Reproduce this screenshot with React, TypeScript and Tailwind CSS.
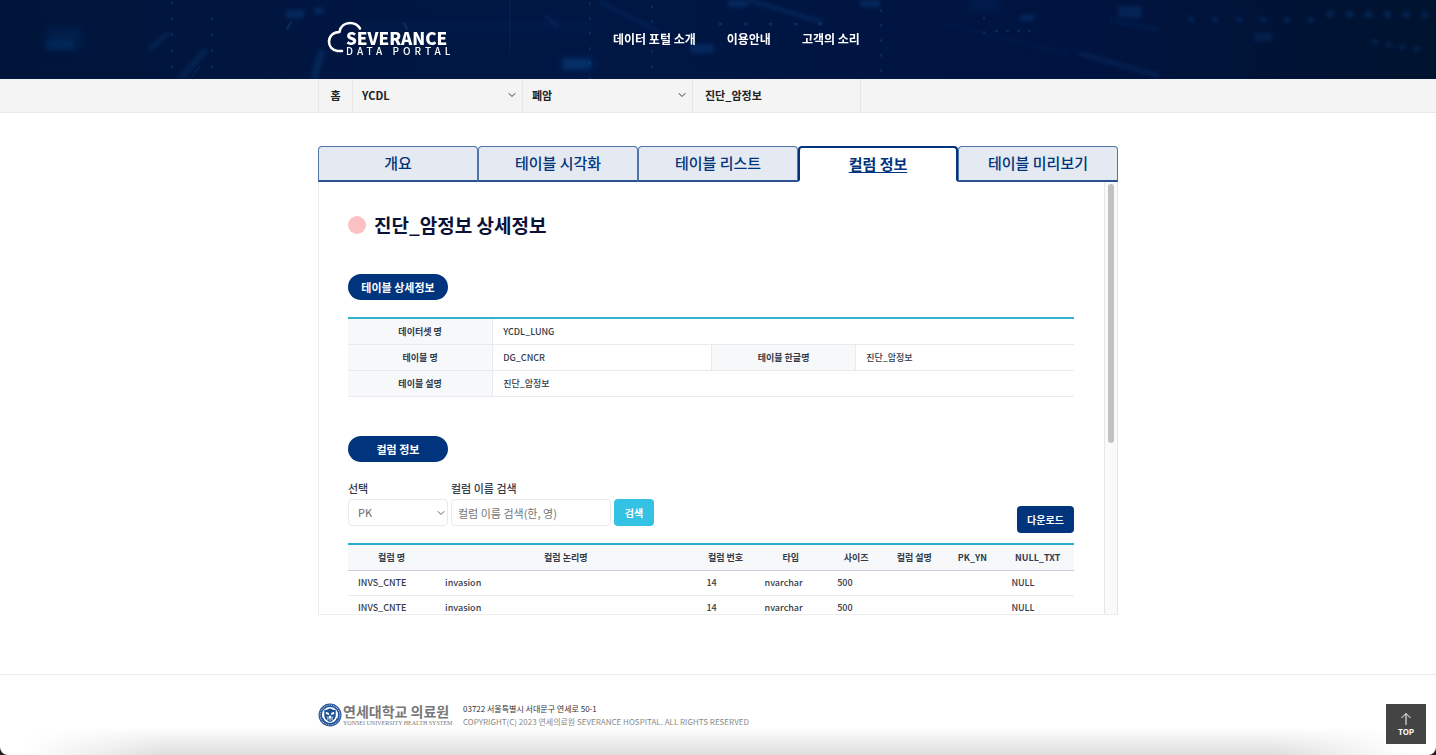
import { useState } from "react";
import { ChevronDown } from "lucide-react";

const NAV = ["데이터 포털 소개", "이용안내", "고객의 소리"];

const TABS = ["개요", "테이블 시각화", "테이블 리스트", "컬럼 정보", "테이블 미리보기"];

const COLUMNS = [
  { label: "컬럼 명", width: "w-[12%]" },
  { label: "컬럼 논리명", width: "w-[36%]" },
  { label: "컬럼 번호", width: "w-[8%]" },
  { label: "타입", width: "w-[10%]" },
  { label: "사이즈", width: "w-[8%]" },
  { label: "컬럼 설명", width: "w-[8%]" },
  { label: "PK_YN", width: "w-[8%]" },
  { label: "NULL_TXT", width: "w-[10%]" },
];

const ROWS = [
  ["INVS_CNTE", "invasion", "14", "nvarchar", "500", "", "", "NULL"],
  ["INVS_CNTE", "invasion", "14", "nvarchar", "500", "", "", "NULL"],
];

function HeaderBackdrop() {
  return (
    <svg
      aria-hidden="true"
      className="absolute inset-0 size-full"
      viewBox="0 0 1436 79"
      preserveAspectRatio="xMidYMid slice"
    >
      <defs>
        <linearGradient id="navy" x1="0" x2="1" y1="0" y2="0">
          <stop offset="0" stopColor="#00153a" />
          <stop offset="0.35" stopColor="#001744" />
          <stop offset="0.75" stopColor="#001440" />
          <stop offset="1" stopColor="#00132f" />
        </linearGradient>
        <filter id="soft" x="-50%" y="-50%" width="200%" height="200%">
          <feGaussianBlur stdDeviation="2" />
        </filter>
        <filter id="haze" x="-50%" y="-50%" width="200%" height="200%">
          <feGaussianBlur stdDeviation="5" />
        </filter>
      </defs>
      <rect width="1436" height="79" fill="url(#navy)" />
      <g filter="url(#haze)" fill="#00468c" opacity="0.2">
        <rect x="46" y="28" width="36" height="22" />
        <rect x="360" y="24" width="240" height="4" />
        <rect x="560" y="56" width="34" height="16" />
        <rect x="970" y="0" width="30" height="10" />
      </g>
      <g filter="url(#soft)" fill="#0a4f96" opacity="0.35">
        <rect x="46" y="40" width="28" height="10" opacity="0.6" />
        <rect x="286" y="10" width="18" height="8" />
        <rect x="314" y="8" width="10" height="6" />
        <rect x="563" y="59" width="28" height="10" />
        <rect x="690" y="44" width="24" height="9" />
        <rect x="728" y="0" width="20" height="7" />
        <rect x="860" y="0" width="20" height="7" />
        <rect x="1020" y="15" width="14" height="6" />
        <rect x="1118" y="6" width="24" height="12" opacity="0.8" />
        <rect x="1254" y="33" width="18" height="8" opacity="0.7" />
      </g>
      <g filter="url(#soft)" stroke="#0a4a8c" fill="none" opacity="0.35">
        <path d="M148 50L170 32" strokeWidth="4" />
        <path d="M180 79L206 50" strokeWidth="7" opacity="0.7" />
        <path d="M314 79L322 50" strokeWidth="7" />
        <path d="M545 15L558 27" strokeWidth="3" />
        <path d="M600 2L660 32" strokeWidth="3" />
        <path d="M748 0L822 22" strokeWidth="4" />
        <path d="M1078 53L1160 76" strokeWidth="5" opacity="0.7" />
        <path d="M942 23L1070 54" strokeWidth="2" opacity="0.6" />
        <path d="M1110 20L1160 30" strokeWidth="3" opacity="0.7" />
      </g>
      <g stroke="#1763a8" strokeLinecap="round" fill="none" opacity="0.3">
        <path d="M172 2V79M212 18V79" strokeWidth="2" strokeDasharray="1 15" />
        <path d="M590 3V79M652 6V79M881 10V79" strokeWidth="2" strokeDasharray="1 14" />
        <path d="M984 18V35" strokeWidth="2" strokeDasharray="1 13" />
        <path d="M996 31H1032" strokeWidth="2" strokeDasharray="1 10" />
        <path d="M720 24H840" strokeWidth="3" strokeDasharray="1 24" />
        <path d="M192 77L200 66" />
        <path d="M510 0V54" opacity="0.6" />
        <path d="M287 29L291 22M404 23L407 29" strokeWidth="2" />
      </g>
      <g filter="url(#soft)" stroke="#0b4c94" strokeLinecap="round" fill="none" opacity="0.35">
        <path d="M1190 19L1315 20" strokeWidth="5" strokeDasharray="2 22" />
        <path d="M1330 14L1425 15" strokeWidth="7" strokeDasharray="1 18" />
        <path d="M1374 42L1428 51" strokeWidth="5" strokeDasharray="2 12" />
      </g>
    </svg>
  );
}

function Logo() {
  return (
    <div className="relative h-9 w-[124px] text-white">
      <svg viewBox="0 0 36 36" className="absolute top-0 left-0 size-9" fill="none" aria-hidden="true">
        <path
          d="M15 30H10.500C5 29 2 25 2 20.500C2 15.500 6 11 12.500 11C13.500 5 18 2 23 2C28 2 31 4 33 7.500"
          stroke="currentColor"
          strokeWidth="2.600"
          strokeLinecap="round"
          strokeLinejoin="round"
        />
      </svg>
      <div className="relative pt-[10px] pl-[19px] whitespace-nowrap">
        <span className="block text-[17px] leading-[14px] font-black">SEVERANCE</span>
        <span className="block text-[10px] leading-[11px] font-medium tracking-[4px]">DATA PORTAL</span>
      </div>
    </div>
  );
}

function Seal() {
  return (
    <svg viewBox="0 0 46 46" className="size-6 shrink-0" aria-hidden="true">
      <circle cx="23" cy="23" r="22" fill="#1d4f96" />
      <circle cx="23" cy="23" r="19" fill="none" stroke="#b9cbe4" strokeWidth="2" strokeDasharray="2 1.500" />
      <circle cx="23" cy="23" r="15.500" fill="#fff" />
      <path d="M12 13C16 14 19 12 23 10C27 12 30 14 34 13V23C34 30 29 34 23 37C17 34 12 30 12 23Z" fill="#1d4f96" />
      <path d="M15 17L21 19V23L15 21ZM31 17L25 19V23L31 21Z" fill="#fff" />
      <circle cx="23" cy="27" r="3" fill="#fff" />
      <path d="M17 26L20 31L17 33M29 26L26 31L29 33M23 30V35" stroke="#fff" strokeWidth="1.500" fill="none" />
      <path d="M9 29C11 35 16 39 23 40C30 39 35 35 37 29" stroke="#1d4f96" strokeWidth="2" fill="none" />
    </svg>
  );
}

function SectionPill({ children }: { children: string }) {
  return (
    <h3 className="flex h-[26px] w-[100px] items-center justify-center rounded-full bg-[#00347d] text-[11px] font-bold text-white">
      {children}
    </h3>
  );
}

function CrumbSelect({ label, value }: { label: string; value: string }) {
  return (
    <div className="relative w-[170px] border-r border-[#e6e6e6]">
      <select
        aria-label={label}
        className="h-full w-full appearance-none bg-transparent px-[9px] text-[11px] font-bold text-[#222] outline-none"
      >
        <option>{value}</option>
      </select>
      <ChevronDown
        strokeWidth={2}
        className="pointer-events-none absolute top-2 right-1 h-4 w-3 text-[#333]"
      />
    </div>
  );
}

export default function App() {
  const [tab, setTab] = useState(3);
  const [keyword, setKeyword] = useState("");

  const th = "border-r border-b border-[#e8eaed] bg-[#f6f8fa] text-center font-bold";
  const td = "border-b border-[#e8eaed] px-[10px] font-medium";

  return (
    <div className="bg-[#222]">
      <div className="relative flex min-h-screen flex-col overflow-hidden rounded-b-lg bg-white font-['Noto_Sans_CJK_KR',sans-serif] text-[#333b4a]">
        <header className="relative h-[79px] bg-[#001541]">
          <HeaderBackdrop />
          <div className="relative mx-auto flex h-[78px] max-w-[800px] items-center">
            <a href="#home" className="ml-[9px]">
              <Logo />
            </a>
            <nav className="ml-[162px] flex gap-[31px] text-[12px] font-bold text-white">
              {NAV.map((item) => (
                <a key={item} href="#nav">
                  {item}
                </a>
              ))}
            </nav>
          </div>
        </header>

        <div className="h-[34px] border-b border-[#e9e9e9] bg-[#f4f4f4]">
          <div className="mx-auto flex h-full max-w-[800px] text-[11px] font-bold text-[#222]">
            <a href="#home" className="flex w-[35px] items-center justify-center border-x border-[#e6e6e6]">
              홈
            </a>
            <CrumbSelect label="데이터셋" value="YCDL" />
            <CrumbSelect label="암종" value="폐암" />
            <span className="flex w-[168px] items-center border-r border-[#e6e6e6] px-3">진단_암정보</span>
          </div>
        </div>

        <main className="mx-auto mt-[33px] w-full max-w-[800px]">
          <div role="tablist" className="grid grid-cols-5">
            {TABS.map((label, i) => (
              <button
                key={label}
                type="button"
                role="tab"
                aria-selected={tab === i}
                onClick={() => setTab(i)}
                className={
                  tab === i
                    ? "h-9 rounded-t border-2 border-[#00347d] border-b-white bg-white text-[15px] font-bold text-[#00347d] underline underline-offset-2"
                    : "h-9 rounded-t border border-b-2 border-[#5274a8] border-b-[#2a5293] bg-[#e5eaf2] text-[15px] font-medium text-[#00347d]"
                }
              >
                {label}
              </button>
            ))}
          </div>

          <div className="flex h-[433px] overflow-hidden border-b border-l border-[#ececec]">
            <div className="min-w-0 flex-1 pt-[29px] pr-[30px] pl-[29px]">
              <h2 className="flex h-7 items-center gap-2 text-[19px] font-bold text-[#0b1237]">
                <span className="size-[18px] rounded-full bg-[#fcc2c3]" />
                진단_암정보 상세정보
              </h2>

              <div className="mt-[35px]">
                <SectionPill>테이블 상세정보</SectionPill>
              </div>
              <table className="mt-[17px] w-full table-fixed border-separate border-spacing-0 border-t-2 border-[#35b1cb] text-[9px]">
                <colgroup>
                  <col className="w-[20%]" />
                  <col className="w-[30%]" />
                  <col className="w-[20%]" />
                  <col className="w-[30%]" />
                </colgroup>
                <tbody>
                  <tr className="h-[26px]">
                    <th className={th}>데이터셋 명</th>
                    <td className={td} colSpan={3}>
                      YCDL_LUNG
                    </td>
                  </tr>
                  <tr className="h-[26px]">
                    <th className={th}>테이블 명</th>
                    <td className={td}>DG_CNCR</td>
                    <th className={`border-l ${th}`}>테이블 한글명</th>
                    <td className={td}>진단_암정보</td>
                  </tr>
                  <tr className="h-[26px]">
                    <th className={th}>테이블 설명</th>
                    <td className={td} colSpan={3}>
                      진단_암정보
                    </td>
                  </tr>
                </tbody>
              </table>

              <div className="mt-[39px]">
                <SectionPill>컬럼 정보</SectionPill>
              </div>
              <div className="mt-[18px] flex items-start justify-between">
                <form className="flex items-end gap-[3px] text-[11px]" onSubmit={(e) => e.preventDefault()}>
                  <div className="w-[100px]">
                    <label htmlFor="kind" className="block h-[19px] leading-4 font-medium">
                      선택
                    </label>
                    <div className="relative">
                      <select
                        id="kind"
                        className="block h-[27px] w-full appearance-none rounded border border-[#e8eaed] bg-white px-[9px] text-[#666] outline-none"
                      >
                        <option>PK</option>
                      </select>
                      <ChevronDown
                        strokeWidth={2}
                        className="pointer-events-none absolute top-[6px] right-px h-4 w-3 text-[#666]"
                      />
                    </div>
                  </div>
                  <div className="w-[160px]">
                    <label htmlFor="keyword" className="block h-[19px] leading-4 font-medium">
                      컬럼 이름 검색
                    </label>
                    <input
                      id="keyword"
                      type="text"
                      value={keyword}
                      onChange={(e) => setKeyword(e.target.value)}
                      placeholder="컬럼 이름 검색(한, 영)"
                      className="block h-[27px] w-full rounded border border-[#e8eaed] px-[6px] outline-none placeholder:text-[#757575]"
                    />
                  </div>
                  <button type="submit" className="h-[27px] w-10 rounded bg-[#33c2e3] text-[10px] font-bold text-white">
                    검색
                  </button>
                </form>
                <button
                  type="button"
                  className="mt-[26px] h-[27px] w-[57px] rounded bg-[#00347d] text-[10px] font-bold text-white"
                >
                  다운로드
                </button>
              </div>

              <table className="mt-[10px] w-full table-fixed border-separate border-spacing-0 border-t-2 border-[#27aecd] text-[9px]">
                <thead>
                  <tr className="h-[26px]">
                    {COLUMNS.map((c) => (
                      <th
                        key={c.label}
                        className={`${c.width} border-b border-[#c9ced6] bg-[#f6f8fa] font-bold whitespace-nowrap`}
                      >
                        {c.label}
                      </th>
                    ))}
                  </tr>
                </thead>
                <tbody>
                  {ROWS.map((row, i) => (
                    <tr key={i} className="h-[25px]">
                      {row.map((cell, j) => (
                        <td key={j} className={td}>
                          {cell}
                        </td>
                      ))}
                    </tr>
                  ))}
                </tbody>
              </table>
            </div>

            {/* scrollbar gutter */}
            <div className="w-[14px] shrink-0 border-x border-[#e6e6e6] bg-[#fafafa] px-[3px] pt-[2px]">
              <div className="h-[259px] w-[6px] rounded-full bg-[#c1c1c1]" />
            </div>
          </div>
        </main>

        <footer className="relative mt-[59px] flex-1 border-t border-[#ececec]">
          <div className="absolute inset-x-6 bottom-0 h-7 bg-linear-to-t from-[#dedede] to-white mask-x-from-90% mask-x-to-100%" />
          <div className="relative mx-auto flex max-w-[800px] items-center pt-[27px]">
            <div className="flex items-center gap-px">
              <Seal />
              <div className="w-[106px] whitespace-nowrap text-[#777]">
                <p className="text-[14px] leading-4 font-bold">연세대학교 의료원</p>
                <p className="font-['Liberation_Serif',serif] text-[6px] leading-2">
                  YONSEI UNIVERSITY HEALTH SYSTEM
                </p>
              </div>
            </div>
            <div className="ml-[14px] text-[8px] leading-[13px]">
              <address className="text-[#333] not-italic">03722 서울특별시 서대문구 연세로 50-1</address>
              <p className="text-[#888]">COPYRIGHT(C) 2023 연세의료원 SEVERANCE HOSPITAL. ALL RIGHTS RESERVED</p>
            </div>
          </div>
        </footer>

        <a
          href="#top"
          className="absolute right-[10px] bottom-[11px] flex size-10 flex-col items-center justify-center gap-px bg-[#444] text-[8px] leading-[10px] font-bold text-white"
        >
          <svg viewBox="0 0 12 14" className="h-[14px] w-3" fill="none" stroke="currentColor" aria-hidden="true">
            <path d="M6 13V1.500M1.500 6L6 1.500L10.500 6" />
          </svg>
          TOP
        </a>
      </div>
    </div>
  );
}
